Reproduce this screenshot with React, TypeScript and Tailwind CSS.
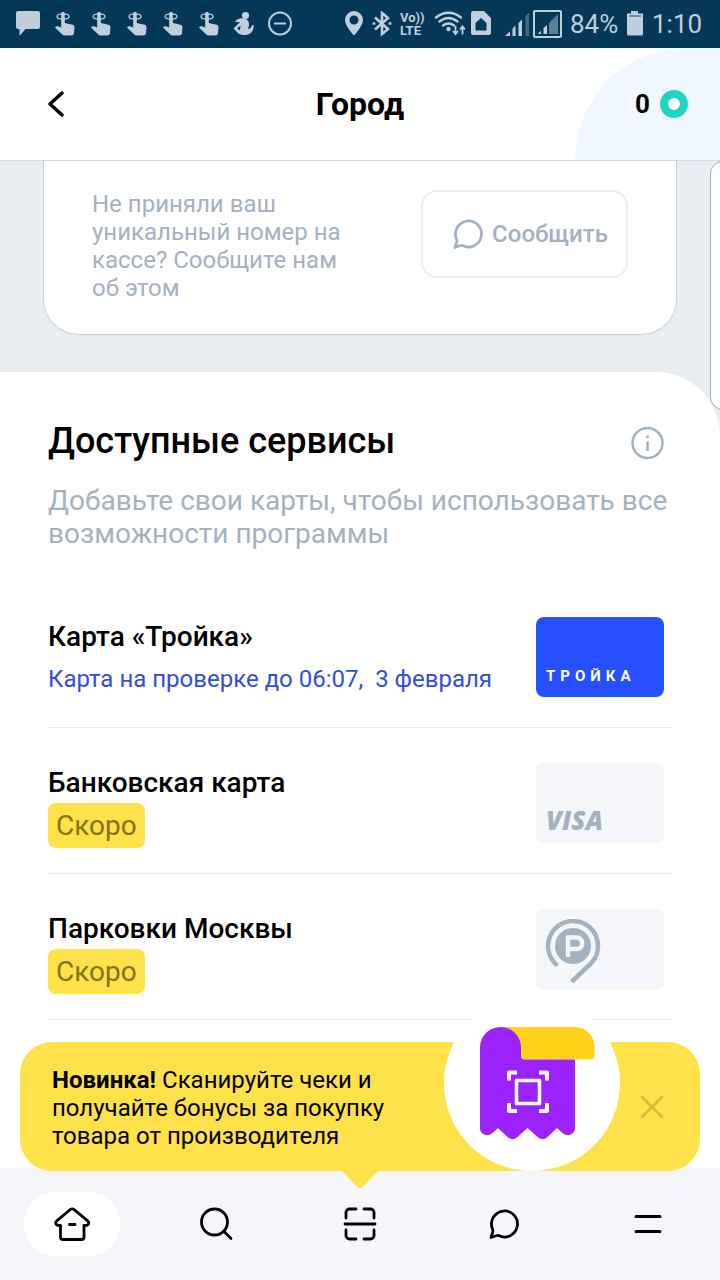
import type { ReactNode } from "react";

type Service = {
    title: string;
    status?: string;
    soon?: boolean;
    logo: ReactNode;
    cardClass: string;
};

/* Status bar icons */

const ReminderIcon = () => (
    <svg viewBox="0 0 24 26" className="h-[26px] w-6" fill="#bfcfdb">
        <ellipse cx="11" cy="5.500" rx="6" ry="2.600" fill="none" stroke="#bfcfdb" strokeWidth="1.300" />
        <path d="M9.200 2.500a1.800 1.800 0 0 1 3.600 0V12l7.700 1.700c1.500.4 2.200 1.500 2 3L22 22c-.3 1.600-1.200 2.500-2.600 2.500h-6.900c-.9 0-1.600-.3-2.200-.9L3 16.500l1-.9c.5-.4 1-.5 1.600-.3l3.600 1.200z" />
    </svg>
);

const MessageIcon = () => (
    <svg viewBox="0 0 24 26" className="h-[26px] w-6" fill="#bfcfdb">
        <path d="M2 0h20a2 2 0 0 1 2 2v14a2 2 0 0 1-2 2H9.500L3.500 25v-7H2a2 2 0 0 1-2-2V2a2 2 0 0 1 2-2z" />
    </svg>
);

const FigureIcon = () => (
    <svg viewBox="0 0 24 26" className="h-[26px] w-6" fill="#bfcfdb">
        <circle cx="13.500" cy="4.500" r="3.600" />
        <path d="M3 11c1.500-2.500 4-3.500 7-3.700 5 0 7.500 3 7 7.200L16 18c2-.2 3.500-1.500 4-4l1.700.3c.3 5.500-3 9.500-8.200 9.700-3.500.2-4.500-.5-6.500-1L1.500 17.500 8 11z" />
        <path d="M8.500 14.500 5 17.500l3 2z" fill="#053857" />
    </svg>
);

const MinusCircleIcon = () => (
    <svg viewBox="0 0 24 26" className="h-[26px] w-6" fill="none" stroke="#b5cddc" strokeWidth="2">
        <circle cx="12" cy="12.500" r="11" />
        <path d="M6 12.500h12" />
    </svg>
);

const PinIcon = () => (
    <svg viewBox="0 0 20 26" className="h-[26px] w-5" fill="#bfcfdb">
        <path fillRule="evenodd" d="M10 0a9 9 0 0 0-9 9c0 6 9 15.500 9 15.500S19 15 19 9a9 9 0 0 0-9-9zm0 4.500a4.500 4.500 0 1 1 0 9 4.500 4.500 0 0 1 0-9z" />
    </svg>
);

const BluetoothIcon = () => (
    <svg viewBox="0 0 20 26" className="h-[26px] w-5" fill="none" stroke="#bfcfdb" strokeWidth="2.600">
        <path d="M3 6.500 16 18l-6 5V2l6 5L3 18.500" />
        <path d="M2 11.200v2.600M18 11.200v2.600" />
    </svg>
);

const WifiSimIcon = () => (
    <svg viewBox="0 0 62 26" className="h-[26px] w-[62px]">
        <g fill="none" stroke="#bfcfdb" strokeWidth="2.400" strokeLinecap="round">
            <path d="M2 6.500Q14.500-3 27 6.500" />
            <path d="M5.500 10.500Q14.500 3.500 23.500 10.500" />
            <path d="M9 14.500q5.500-4 11 0" />
        </g>
        <circle cx="14.500" cy="18" r="2.200" fill="#bfcfdb" />
        <g fill="none" stroke="#bfcfdb" strokeWidth="1.800">
            <path d="M21.500 15v7.500M19 20l2.500 3 2.500-3" />
            <path d="M28.500 23.500V16M26 18.500l2.500-3 2.500 3" />
        </g>
        <path fill="#bfcfdb" fillRule="evenodd" d="M39 0h11l7 7v15a2 2 0 0 1-2 2H39a2 2 0 0 1-2-2V2a2 2 0 0 1 2-2zm8 7-5.500 5v7.500h11V12z" />
    </svg>
);

const SignalIcon = () => (
    <svg viewBox="0 0 58 28" className="h-7 w-[58px]">
        <g fill="#bfcfdb">
            <path d="M1 26 6 21.500V26zM8.500 18.500l3-3V26h-3zM14.500 13l3.500-3.500V26h-3.500z" />
            <path d="M34 24l3-3.500V24zM39.500 18l3.500-3v9h-3.500z" />
        </g>
        <path d="M21.500 6 25 2.500V26h-3.500z" fill="#426b88" />
        <path d="M45 13 54 4v20h-9z" fill="#5b7f99" />
        <rect x="30" y="1" width="27" height="26" rx="1" fill="none" stroke="#bfcfdb" strokeWidth="2" />
    </svg>
);

const BatteryIcon = () => (
    <svg viewBox="0 0 18 26" className="h-[26px] w-[18px]">
        <path d="M5 0h7v2.500h5V23a1.500 1.500 0 0 1-1.500 1.500h-13A1.500 1.500 0 0 1 1 23V2.500h4z" fill="#bfcfdb" />
        <path d="M3 5h12" stroke="#6c8ea6" strokeWidth="2" />
    </svg>
);

/* App icons */

const BubbleIcon = () => (
    <svg viewBox="0 0 32 32" className="size-8" fill="none" stroke="currentColor" strokeWidth="2.800" strokeLinejoin="round" strokeLinecap="round">
        <path d="M10.500 27.500a13 13 0 1 0-6-6.500c.5 1.200.5 2 .2 3.200L3 29.500l5-1.800c1-.4 1.700-.5 2.500-.2z" />
    </svg>
);

const HomeIcon = () => (
    <svg viewBox="0 0 40 36" className="h-9 w-10" fill="none" stroke="currentColor" strokeWidth="2.800" strokeLinejoin="round" strokeLinecap="round">
        <path d="M8.500 19.500v11.500a2.500 2.500 0 0 0 2.500 2.500h18.500a2.500 2.500 0 0 0 2.500-2.500v-11.500h2c2.700 0 3.800-3 1.700-4.700L22.200 3.700a3.200 3.200 0 0 0-4 0L4.800 14.800c-2.100 1.700-1 4.700 1.700 4.700z" />
        <path d="M17.500 18.500h5.500" />
    </svg>
);

const SearchIcon = () => (
    <svg viewBox="0 0 34 34" className="size-[34px]" fill="none" stroke="currentColor" strokeWidth="2.800" strokeLinecap="round">
        <circle cx="15.500" cy="15" r="13" />
        <path d="m25 24.500 7 7" />
    </svg>
);

const ScanIcon = () => (
    <svg viewBox="0 0 34 34" className="size-[34px]" fill="none" stroke="currentColor" strokeWidth="2.800" strokeLinecap="round">
        <path d="M2 17h30M3 11V5.500A3.500 3.500 0 0 1 6.500 2H13M21 2h6.500A3.500 3.500 0 0 1 31 5.500V11M3 23v5.500A3.500 3.500 0 0 0 6.500 32H13M21 32h6.500a3.500 3.500 0 0 0 3.500-3.500V23" />
    </svg>
);

const MenuIcon = () => (
    <svg viewBox="0 0 32 32" className="size-8" fill="none" stroke="currentColor" strokeWidth="3" strokeLinecap="round">
        <path d="M4 8.500h24M4 23.500h24" />
    </svg>
);

const ReceiptArt = () => (
    <svg viewBox="0 0 116 114" className="h-[114px] w-[116px]">
        <path d="M20 1h75a19.500 19.500 0 0 1 19.500 20v9.500a3 3 0 0 1-3 3H41L30 10z" fill="#ffd11b" />
        <path
            d="M20.500 1a20.500 20.500 0 0 1 20.500 20V30a3.500 3.500 0 0 0 3.500 3.500H95V102c0 7-8 9-12.500 5L77 102l-9 8.500c-4 3.500-7 3.500-11 0L47.500 102 38 110.500c-4 3.500-7 3.500-11 0L18 102l-5.500 5C8 111 0 109 0 102V21A20.500 20.500 0 0 1 20.500 1z"
            fill="#9a22fc"
        />
        <rect x="36.500" y="54.500" width="23" height="23" fill="none" stroke="#fff" strokeWidth="3.500" strokeLinejoin="round" />
        <path d="M37 46.500H29v8M59 46.500h8v8M37 85H29v-8M59 85h8v-8" fill="none" stroke="#fff" strokeWidth="4" strokeLinejoin="round" />
    </svg>
);

const ParkingLogo = () => (
    <svg viewBox="0 0 56 66" className="h-[66px] w-14 self-start">
        <path d="M11 45.300A25 25 0 1 1 45.700 44.700L28 61.500" fill="none" stroke="#a4b1c0" strokeWidth="4.500" strokeLinecap="round" strokeLinejoin="round" />
        <circle cx="28" cy="27" r="18" fill="#a4b1c0" />
        <path d="M23 38V18.500h8.500a5.500 5.500 0 0 1 0 11.500H23" fill="none" stroke="#f4f6fa" strokeWidth="4.500" />
    </svg>
);

const services: Service[] = [
    {
        title: "Карта «Тройка»",
        status: "Карта на проверке до 06:07,  3 февраля",
        logo: <span className="text-[15px] leading-5 font-bold tracking-[5px] text-white">ТРОЙКА</span>,
        cardClass: "bg-[#254fff] items-end pl-[10px] pb-[11px]",
    },
    {
        title: "Банковская карта",
        soon: true,
        logo: <span className="font-['Open_Sans',sans-serif] text-[26px] leading-6 font-extrabold text-[#a4b1c0] italic">VISA</span>,
        cardClass: "bg-[#f4f6fa] items-end pl-[10px] pb-[11px]",
    },
    {
        title: "Парковки Москвы",
        soon: true,
        logo: <ParkingLogo />,
        cardClass: "bg-[#f4f6fa] pl-[9px] pt-[10px]",
    },
];

const tabs = [
    { label: "Главная", icon: <HomeIcon />, active: true },
    { label: "Поиск", icon: <SearchIcon /> },
    { label: "Сканер", icon: <ScanIcon /> },
    { label: "Чат", icon: <BubbleIcon /> },
    { label: "Меню", icon: <MenuIcon /> },
];

function StatusBar() {
    return (
        <div className="flex h-12 items-center justify-between bg-[#053857] px-4 text-[#bfcfdb]">
            <div className="flex items-center gap-3">
                <MessageIcon />
                <ReminderIcon />
                <ReminderIcon />
                <ReminderIcon />
                <ReminderIcon />
                <ReminderIcon />
                <FigureIcon />
                <MinusCircleIcon />
            </div>
            <div className="flex items-center gap-2">
                <PinIcon />
                <BluetoothIcon />
                <div className="flex w-[26px] flex-col text-[13px] leading-[13px] font-bold whitespace-nowrap">
                    <span>Vo))</span>
                    <span>LTE</span>
                </div>
                <WifiSimIcon />
                <SignalIcon />
                <span className="w-12 text-[26px] leading-8">84%</span>
                <BatteryIcon />
                <span className="w-13 text-[26px] leading-8">1:10</span>
            </div>
        </div>
    );
}

function Header() {
    return (
        <header className="grid h-[113px] grid-cols-[145px_1fr_145px] items-center border-b border-[#d5dade] bg-white">
            <button aria-label="Назад" className="ml-11 flex size-6 items-center justify-center">
                <svg viewBox="0 0 24 28" className="h-7 w-6 shrink-0" fill="none" stroke="#000" strokeWidth="3.500" strokeLinecap="round" strokeLinejoin="round">
                    <path d="M18 3 6 14l12 11" />
                </svg>
            </button>
            <h1 className="text-center text-[32px] leading-10 font-bold">Город</h1>
            <div className="flex h-full items-center justify-end gap-[10px] rounded-tl-[112px] bg-[#f0f7ff] pr-8">
                <span className="text-[26px] leading-8 font-bold">0</span>
                <span className="size-7 rounded-full border-8 border-[#1fd6bd] bg-white" />
            </div>
        </header>
    );
}

export default function App() {
    return (
        <div className="flex min-h-screen flex-col bg-white font-[Roboto,'Liberation_Sans',sans-serif] text-black">
            <StatusBar />
            <Header />

            <main className="relative flex flex-1 flex-col overflow-hidden bg-[#e8edf1]">
                {/* Report card */}
                <section className="mx-[43px] mb-[37px] flex items-start justify-between rounded-b-[36px] border border-t-0 border-[#c9d0d6] bg-white px-12 pt-[29px] pb-8 text-[#a4b1c0]">
                    <p className="w-64 text-2xl leading-7">Не приняли ваш уникальный номер на кассе? Сообщите нам об этом</p>
                    <button className="flex h-[88px] items-center gap-2 rounded-2xl border-2 border-[#eceef0] pr-[18px] pl-[29px] text-2xl font-medium">
                        <BubbleIcon />
                        Сообщить
                    </button>
                </section>

                {/* Edge of the next card */}
                <div className="absolute top-0 -right-4 z-10 h-[249px] w-[26px] rounded-2xl border border-[#a9afb4] bg-[#fbfcfd]" />

                {/* Services */}
                <section className="flex-1 rounded-tr-[64px] bg-white px-12 pt-12 pb-[22px]">
                    <div className="flex items-center justify-between pr-2">
                        <h2 className="text-4xl leading-[42px] font-medium">Доступные сервисы</h2>
                        <button aria-label="Информация" className="pt-1 text-[#a4b1c0]">
                            <svg viewBox="0 0 34 34" className="size-[34px]" fill="none" stroke="currentColor" strokeWidth="2.500">
                                <circle cx="17.500" cy="17" r="15" />
                                <path d="M17.500 15.500V25M17.500 9.500V12" />
                            </svg>
                        </button>
                    </div>
                    <p className="mt-[22px] text-[28px] leading-[33px] text-[#a4b1c0]">Добавьте свои карты, чтобы использовать все возможности программы</p>

                    <ul className="mt-8">
                        {services.map((service) => (
                            <li key={service.title} className="flex justify-between border-b border-[#e9ebee] pt-[35px] pr-2 pb-[30px]">
                                <div>
                                    <h3 className="mt-1 text-[28px] leading-8 font-medium">{service.title}</h3>
                                    {service.status && <p className="mt-3 text-2xl leading-7 whitespace-pre text-[#314fd6]">{service.status}</p>}
                                    {service.soon && (
                                        <span className="mt-1 -mb-[5px] flex h-[45px] w-fit items-center rounded-lg bg-[#ffe149] px-2 text-[28px] text-[#857216]">Скоро</span>
                                    )}
                                </div>
                                <div className={`flex h-20 w-32 shrink-0 rounded-lg ${service.cardClass}`}>{service.logo}</div>
                            </li>
                        ))}
                    </ul>
                </section>
            </main>

            {/* Promo banner, its tail points at the scanner tab */}
            <aside className="relative z-10 mx-5 -mb-[3px] flex h-[129px] items-center justify-between rounded-[32px] bg-[#ffe149] px-8">
                <p className="w-[350px] pt-0.5 text-2xl leading-7">
                    <b>Новинка!</b> Сканируйте чеки и получайте бонусы за покупку товара от производителя
                </p>
                <div className="absolute right-20 bottom-0 flex size-44 items-center justify-center rounded-full bg-white pl-3">
                    <ReceiptArt />
                </div>
                <button aria-label="Закрыть" className="flex size-8 items-center justify-center text-[#d6bb38]">
                    <svg viewBox="0 0 24 24" className="size-6" fill="none" stroke="currentColor" strokeWidth="2.500" strokeLinecap="round">
                        <path d="m2 2 20 20M22 2 2 22" />
                    </svg>
                </button>
                <svg viewBox="0 0 36 17" className="absolute top-full left-1/2 h-[17px] w-9 -translate-x-1/2" fill="#ffe149">
                    <path d="M0 0h36L21 15.500q-3 3-6 0z" />
                </svg>
            </aside>

            <nav className="grid h-28 grid-cols-5 items-center bg-[#f4f6fa]">
                {tabs.map((tab) => (
                    <button
                        key={tab.label}
                        aria-label={tab.label}
                        className={`mx-auto flex h-16 w-24 items-center justify-center rounded-full ${tab.active ? "bg-white" : ""}`}
                    >
                        {tab.icon}
                    </button>
                ))}
            </nav>
        </div>
    );
}
